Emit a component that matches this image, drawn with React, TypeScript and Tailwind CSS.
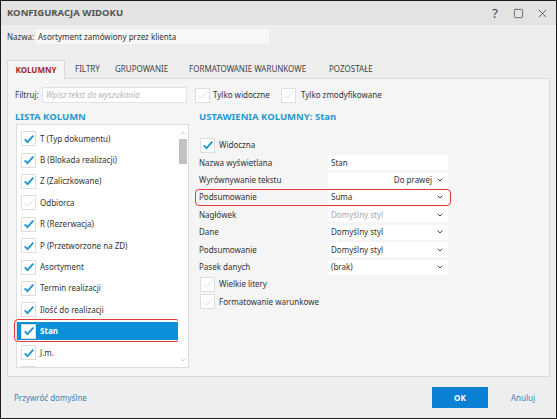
import { Square, X, ChevronDown, ChevronUp } from 'lucide-react';

interface ColumnItem {
  label: string;
  checked: boolean;
  selected?: boolean;
}

// last row only peeks out at the bottom of the list, so it has no visible label
const columns: ColumnItem[] = [
  { label: 'T (Typ dokumentu)', checked: true },
  { label: 'B (Blokada realizacji)', checked: true },
  { label: 'Z (Zaliczkowane)', checked: true },
  { label: 'Odbiorca', checked: false },
  { label: 'R (Rezerwacja)', checked: true },
  { label: 'P (Przetworzone na ZD)', checked: true },
  { label: 'Asortyment', checked: true },
  { label: 'Termin realizacji', checked: true },
  { label: 'Ilość do realizacji', checked: true },
  { label: 'Stan', checked: true, selected: true },
  { label: 'J.m.', checked: true },
  { label: '', checked: false },
];

function CheckBox({ on }: { on: boolean }) {
  return (
    <span className="w-[15px] h-[15px] bg-white border border-[#dedede] flex items-center justify-center shrink-0">
      {on ? (
        <svg viewBox="0 0 16 16" className="w-[12px] h-[12px]">
          <path d="M2.2 8.6 L6 12.2 L13.8 3.6" fill="none" className="stroke-[#1b97d5]" strokeWidth={2.4} />
        </svg>
      ) : (
        <svg viewBox="0 0 16 16" className="w-[12px] h-[12px]">
          <path d="M2.2 8.6 L6 12.2 L13.8 3.6" fill="none" className="stroke-[#cde3f1]" strokeWidth={1.3} />
        </svg>
      )}
    </span>
  );
}

function SelectBox({ value, align = 'left', muted = false }: { value: string; align?: 'left' | 'right'; muted?: boolean }) {
  return (
    <div className="w-[120px] h-[15px] bg-white flex items-center pl-[3px] pr-[4px]">
      <span className={`flex-1 ${align === 'right' ? 'text-right pr-[4px]' : ''} ${muted ? 'text-[#a8a8a8]' : 'text-[#333]'}`}>{value}</span>
      <ChevronDown size={8} strokeWidth={3} className="text-[#444]" />
    </div>
  );
}

function SettingRow({ label, children, highlight = false }: { label: string; children: React.ReactNode; highlight?: boolean }) {
  return (
    <div
      className={`h-[17.4px] flex items-center pl-[3px] pr-[2px] rounded-[4px] border-[1.5px] ${
        highlight ? 'border-[#e23b3f]' : 'border-transparent'
      }`}
    >
      <span className="w-[129px]">{label}</span>
      {children}
    </div>
  );
}

export default function App() {
  return (
    <div className="w-[557px] h-[419px] border border-[#1c1c1c] bg-[#eeeeee] flex flex-col font-['Noto_Sans',sans-serif] text-[8px] text-[#333] overflow-hidden">
      {/* Title bar */}
      <div className="h-[24px] shrink-0 bg-[#e3e3e3] flex items-center pl-[6px] pr-[7px]">
        <span className="flex-1 font-bold text-[9.5px] text-[#555]">KONFIGURACJA WIDOKU</span>
        <div className="flex items-center text-[#444]">
          <span className="text-[13px] leading-none w-[10px] text-center">?</span>
          <Square size={11} strokeWidth={1.6} className="ml-[13px]" />
          <X size={13} strokeWidth={1.5} className="ml-[12px]" />
        </div>
      </div>

      {/* Name */}
      <div className="mt-[4px] h-[15px] flex items-center px-[6px]">
        <span className="w-[29px] whitespace-nowrap">Nazwa:</span>
        <div className="w-[233px] h-[15px] bg-[#f8f8f8] flex items-center pl-[2px]">Asortyment zamówiony przez klienta</div>
      </div>

      {/* Tabs */}
      <div className="mt-[16px] h-[18px] shrink-0 flex items-end px-[6px] text-[8px]">
        <div className="w-[58px] h-[19px] bg-[#f5f5f5] border border-b-0 border-[#d9d9d9] flex items-center justify-center font-bold text-[#a3282b] relative z-10 -mb-px">
          KOLUMNY
        </div>
        <div className="w-[41px] h-[18px] flex items-center pl-[10px] text-[#444]">FILTRY</div>
        <div className="w-[73px] h-[18px] flex items-center pl-[9px] text-[#444]">GRUPOWANIE</div>
        <div className="w-[140px] h-[18px] flex items-center pl-[10px] text-[#444]">FORMATOWANIE WARUNKOWE</div>
        <div className="h-[18px] flex items-center pl-[10px] text-[#444]">POZOSTAŁE</div>
      </div>

      {/* Panel */}
      <div className="mx-[6px] h-[299px] shrink-0 bg-[#f5f5f5] border border-[#d9d9d9] flex flex-col pl-[7px] pr-[6px] overflow-hidden">
        {/* Filter row */}
        <div className="mt-[8px] h-[16px] flex items-center">
          <span className="w-[27px]">Filtruj:</span>
          <div className="w-[145px] h-[16px] bg-white border border-[#e2e2e2] flex items-center pl-[3px] italic text-[#b5b5b5]">
            Wpisz tekst do wyszukania
          </div>
          <div className="ml-[8px] w-[86px] flex items-center gap-[3px]">
            <CheckBox on={false} />
            <span>Tylko widoczne</span>
          </div>
          <div className="flex items-center gap-[5px]">
            <CheckBox on={false} />
            <span>Tylko zmodyfikowane</span>
          </div>
        </div>

        <div className="mt-[7px] flex">
          {/* Left column */}
          <div className="w-[174px] flex flex-col">
            <div className="h-[14px] flex items-center font-bold text-[9.5px] text-[#2799d1]">LISTA KOLUMN</div>
            <div className="h-[244px] bg-white border border-[#dcdcdc] flex ml-px">
              <div className="flex-1 overflow-hidden -ml-[4px] pl-[4px] pt-[3px]">
                <div className="flex flex-col">
                  {columns.map((c, i) => (
                    <div key={i} className="h-[21.4px] shrink-0 flex items-center">
                      <div
                        className={`relative w-full h-[18.5px] flex items-center pl-[4px] gap-[4px] ${
                          c.selected ? 'bg-[#0b8fd8] text-white font-bold' : ''
                        }`}
                      >
                        <CheckBox on={c.checked} />
                        {c.label && <span>{c.label}</span>}
                        {c.selected && (
                          <span className="absolute -left-[3px] -right-[2px] -top-[3px] -bottom-[2px] border-[1.5px] border-[#e23b3f] rounded-[4px]" />
                        )}
                      </div>
                    </div>
                  ))}
                </div>
              </div>
              {/* Scrollbar */}
              <div className="w-[10px] flex flex-col items-center pt-[4px] pb-[3px] text-[#b5b5b5]">
                <ChevronUp size={8} strokeWidth={2} />
                <div className="mt-[2px] w-[8px] h-[25px] bg-[#c2c2c2]" />
                <div className="flex-1" />
                <ChevronDown size={8} strokeWidth={2} />
              </div>
            </div>
          </div>

          {/* Right column */}
          <div className="ml-[6px] w-[256px] flex flex-col">
            <div className="h-[14px] flex items-center pl-[4px] font-bold text-[9.5px] text-[#2799d1]">USTAWIENIA KOLUMNY: Stan</div>
            <div className="mt-[13px] h-[16px] flex items-center pl-[5px] gap-[4px]">
              <CheckBox on={true} />
              <span>Widoczna</span>
            </div>
            <div className="mt-[1px]">
              <SettingRow label="Nazwa wyświetlana">
                <div className="w-[120px] h-[15px] bg-white flex items-center pl-[3px]">Stan</div>
              </SettingRow>
              <SettingRow label="Wyrównywanie tekstu">
                <SelectBox value="Do prawej" align="right" />
              </SettingRow>
              <SettingRow label="Podsumowanie" highlight>
                <SelectBox value="Suma" />
              </SettingRow>
              <SettingRow label="Nagłówek">
                <SelectBox value="Domyślny styl" muted />
              </SettingRow>
              <SettingRow label="Dane">
                <SelectBox value="Domyślny styl" />
              </SettingRow>
              <SettingRow label="Podsumowanie">
                <SelectBox value="Domyślny styl" />
              </SettingRow>
              <SettingRow label="Pasek danych">
                <SelectBox value="(brak)" />
              </SettingRow>
              <div className="h-[17.4px] flex items-center pl-[5px] gap-[4px]">
                <CheckBox on={false} />
                <span>Wielkie litery</span>
              </div>
              <div className="h-[17.4px] flex items-center pl-[5px] gap-[4px]">
                <CheckBox on={false} />
                <span>Formatowanie warunkowe</span>
              </div>
            </div>
          </div>
        </div>
      </div>

      {/* Footer */}
      <div className="flex-1 flex items-center pl-[13px] pr-[21px]">
        <span className="flex-1 text-[#3a7fc2]">Przywróć domyślne</span>
        <button className="w-[56px] h-[21px] bg-[#0a80d4] text-white font-bold">OK</button>
        <span className="ml-[23px] text-[#3a7fc2]">Anuluj</span>
      </div>
    </div>
  );
}
